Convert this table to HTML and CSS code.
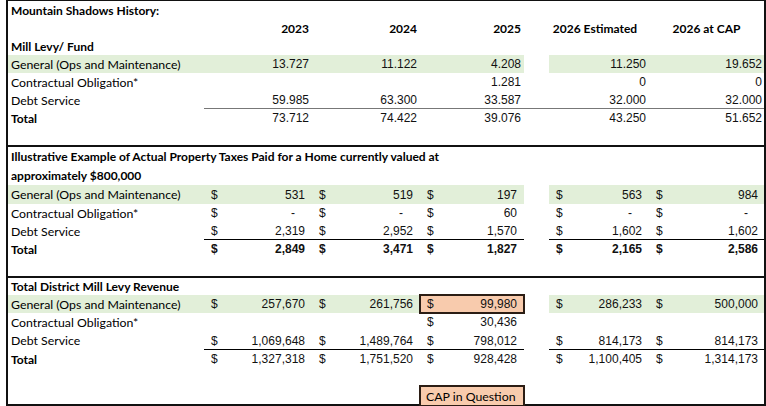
FILE: index.html
```html
<!DOCTYPE html>
<html>
<head>
<meta charset="utf-8">
<link rel="stylesheet" href="styles.css">
</head>
<body>
<div class="sheet">
  <section class="sec sec1">
    <div class="row r18"><div class="c lbl b span">Mountain Shadows History:</div></div>
    <div class="row r18">
      <div class="c"></div>
      <div class="c hd right">2023</div>
      <div class="c hd right">2024</div>
      <div class="c hd right">2025</div>
      <div class="c gap"></div>
      <div class="c hd center est">2026 Estimated</div>
      <div class="c hd center">2026 at CAP</div>
    </div>
    <div class="row r18"><div class="c lbl b">Mill Levy/ Fund</div></div>
    <div class="row r18 hl">
      <div class="c lbl">General (Ops and Maintenance)</div>
      <div class="c num">13.727</div>
      <div class="c num">11.122</div>
      <div class="c num">4.208</div>
      <div class="c gap"></div>
      <div class="c num">11.250</div>
      <div class="c num">19.652</div>
    </div>
    <div class="row r18">
      <div class="c lbl">Contractual Obligation*</div>
      <div class="c num"></div>
      <div class="c num"></div>
      <div class="c num">1.281</div>
      <div class="c gap"></div>
      <div class="c num">0</div>
      <div class="c num">0</div>
    </div>
    <div class="row r18 ul-gray">
      <div class="c lbl">Debt Service</div>
      <div class="c num u">59.985</div>
      <div class="c num u">63.300</div>
      <div class="c num u">33.587</div>
      <div class="c gap u"></div>
      <div class="c num u">32.000</div>
      <div class="c num u">32.000</div>
    </div>
    <div class="row r18">
      <div class="c lbl b">Total</div>
      <div class="c num">73.712</div>
      <div class="c num">74.422</div>
      <div class="c num">39.076</div>
      <div class="c gap"></div>
      <div class="c num">43.250</div>
      <div class="c num">51.652</div>
    </div>
    <div class="row r18"></div>
  </section>

  <section class="sec sec2">
    <div class="row r38"><div class="c lbl b wrap">Illustrative Example of Actual Property Taxes Paid for a Home currently valued at<br>approximately $800,000</div></div>
    <div class="row r19 hl">
      <div class="c lbl">General (Ops and Maintenance)</div>
      <div class="c acc"><span>$</span><span>531</span></div>
      <div class="c acc"><span>$</span><span>519</span></div>
      <div class="c acc"><span>$</span><span>197</span></div>
      <div class="c gap"></div>
      <div class="c acc"><span>$</span><span>563</span></div>
      <div class="c acc"><span>$</span><span>984</span></div>
    </div>
    <div class="row r18">
      <div class="c lbl">Contractual Obligation*</div>
      <div class="c acc"><span>$</span><span class="dash">-</span></div>
      <div class="c acc"><span>$</span><span class="dash">-</span></div>
      <div class="c acc"><span>$</span><span>60</span></div>
      <div class="c gap"></div>
      <div class="c acc"><span>$</span><span class="dash">-</span></div>
      <div class="c acc"><span>$</span><span class="dash">-</span></div>
    </div>
    <div class="row r18">
      <div class="c lbl">Debt Service</div>
      <div class="c acc u"><span>$</span><span>2,319</span></div>
      <div class="c acc u"><span>$</span><span>2,952</span></div>
      <div class="c acc u"><span>$</span><span>1,570</span></div>
      <div class="c gap"></div>
      <div class="c acc u"><span>$</span><span>1,602</span></div>
      <div class="c acc u"><span>$</span><span>1,602</span></div>
    </div>
    <div class="row r18 bold">
      <div class="c lbl b">Total</div>
      <div class="c acc"><span>$</span><span>2,849</span></div>
      <div class="c acc"><span>$</span><span>3,471</span></div>
      <div class="c acc"><span>$</span><span>1,827</span></div>
      <div class="c gap"></div>
      <div class="c acc"><span>$</span><span>2,165</span></div>
      <div class="c acc"><span>$</span><span>2,586</span></div>
    </div>
    <div class="row r18"></div>
  </section>

  <section class="sec sec3">
    <div class="row r17"><div class="c lbl b span">Total District Mill Levy Revenue</div></div>
    <div class="row r18 hl">
      <div class="c lbl">General (Ops and Maintenance)</div>
      <div class="c acc"><span>$</span><span>257,670</span></div>
      <div class="c acc"><span>$</span><span>261,756</span></div>
      <div class="c acc cap"><span>$</span><span>99,980</span></div>
      <div class="c gap"></div>
      <div class="c acc"><span>$</span><span>286,233</span></div>
      <div class="c acc"><span>$</span><span>500,000</span></div>
    </div>
    <div class="row r18">
      <div class="c lbl">Contractual Obligation*</div>
      <div class="c"></div>
      <div class="c"></div>
      <div class="c acc"><span>$</span><span>30,436</span></div>
      <div class="c gap"></div>
      <div class="c"></div>
      <div class="c"></div>
    </div>
    <div class="row r19">
      <div class="c lbl">Debt Service</div>
      <div class="c acc u"><span>$</span><span>1,069,648</span></div>
      <div class="c acc u"><span>$</span><span>1,489,764</span></div>
      <div class="c acc u"><span>$</span><span>798,012</span></div>
      <div class="c gap"></div>
      <div class="c acc u"><span>$</span><span>814,173</span></div>
      <div class="c acc u"><span>$</span><span>814,173</span></div>
    </div>
    <div class="row r18">
      <div class="c lbl b">Total</div>
      <div class="c acc"><span>$</span><span>1,327,318</span></div>
      <div class="c acc"><span>$</span><span>1,751,520</span></div>
      <div class="c acc"><span>$</span><span>928,428</span></div>
      <div class="c gap"></div>
      <div class="c acc"><span>$</span><span>1,100,405</span></div>
      <div class="c acc"><span>$</span><span>1,314,173</span></div>
    </div>
    <div class="row r18"></div>
    <div class="row r18">
      <div class="c"></div>
      <div class="c"></div>
      <div class="c"></div>
      <div class="c lbl capnote">CAP in Question</div>
    </div>
  </section>
</div>
</body>
</html>
```

FILE: styles.css
```css
* { box-sizing: border-box; }
html, body { margin: 0; padding: 0; background: #fff; }
body { width: 766px; height: 406px; overflow: hidden; }

.sheet {
  margin-left: 6px;
  width: 760px;
  border-left: 2px solid #111;
  border-right: 2px solid #111;
  border-top: 1px solid #111;
  border-bottom: 2px solid #111;
  color: #111;
}

.sec2, .sec3 { border-top: 2px solid #111; }

.row {
  display: grid;
  grid-template-columns: 196px 108px 108px 104px 25px 100px 115px;
}
.r17 { height: 17px; }
.r18 { height: 18px; }
.r19 { height: 19px; }
.r38 { height: 38px; }

.c {
  display: flex;
  align-items: center;
  min-width: 0;
  white-space: nowrap;
  position: relative;
}

.lbl {
  font-family: Lato, "Noto Sans", sans-serif;
  font-size: 12.3px;
  padding-left: 3px;
  color: #000;
}
.lbl.b { font-weight: bold; font-size: 12px; }
.span { grid-column: 1 / -1; }
.wrap {
  grid-column: 1 / 5;
  white-space: normal;
  line-height: 19px;
  align-items: flex-start;
}

.hd {
  font-family: Lato, "Noto Sans", sans-serif;
  font-weight: bold;
  font-size: 12px;
  color: #000;
}
.right { justify-content: flex-end; padding-right: 3px; }
.center { justify-content: center; }
.est { padding-right: 8px; }

.num {
  font-family: "Liberation Sans", Arial, sans-serif;
  font-size: 12px;
  justify-content: flex-end;
  padding-right: 3px;
}
.sec1 .row > .c:last-child.num { padding-right: 2px; }

.acc {
  font-family: "Liberation Sans", Arial, sans-serif;
  font-size: 12px;
  justify-content: space-between;
  padding-left: 7px;
  padding-right: 7px;
}
.row > .acc:last-child { padding-right: 6px; }
.acc .dash { padding-right: 10px; }
.bold .acc { font-weight: bold; }

.hl > .c:not(.gap) { background: #e2efd9; }
.hl > .c.cap { background: #f8cbad; }

.cap {
  outline: 2px solid #2b1d14;
  outline-offset: -1px;
  z-index: 1;
}

.capnote {
  background: #f8cbad;
  outline: 2px solid #2b1d14;
  outline-offset: -1px;
  padding-left: 6px;
  align-self: stretch;
  height: 20px;
}

.u { box-shadow: inset 0 -1px 0 #000; }
.ul-gray .u { box-shadow: inset 0 -1px 0 #777; }
```
